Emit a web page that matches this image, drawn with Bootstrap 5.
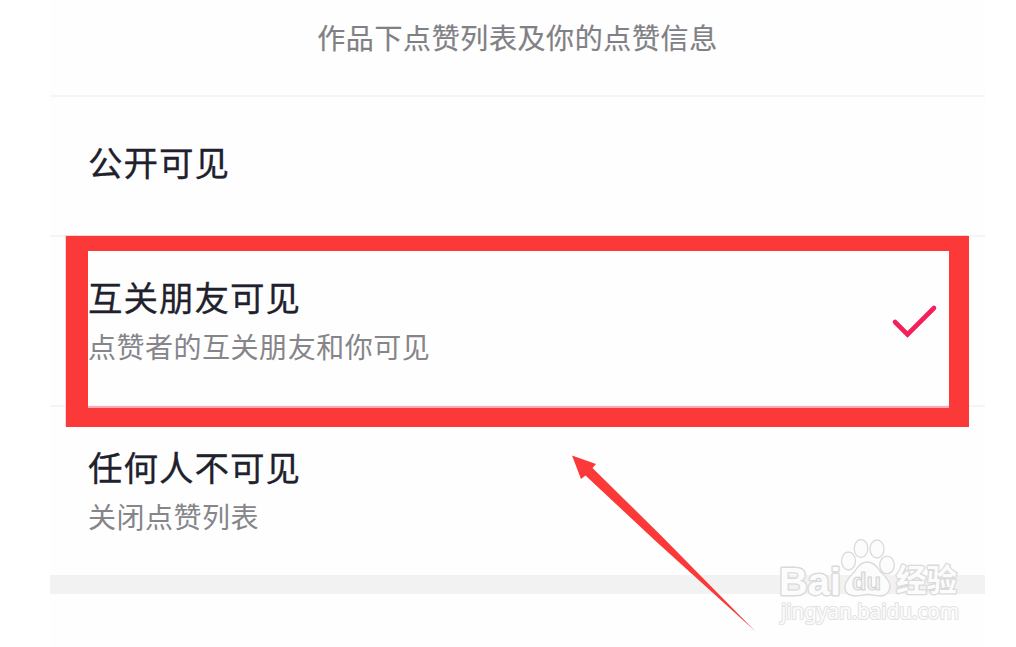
<!DOCTYPE html>
<html lang="zh-CN">
<head>
<meta charset="utf-8">
<title>点赞列表可见范围</title>
<link href="https://cdn.jsdelivr.net/npm/bootstrap@5.3.0/dist/css/bootstrap.min.css" rel="stylesheet">
<style>
body{font-family:"Noto Sans CJK SC",sans-serif;background:#fff;height:647px}
.sheet{width:935px;height:647px;margin-left:50px;background:#fefefe}
.intro{height:95px;padding-top:17px;font-size:28px;letter-spacing:.62px;line-height:40px;color:#808085;-webkit-text-stroke:.2px #808085}
.option{border-top:2px solid #f5f5f5;padding:0 39px 0 38px}
.option.public{height:140px;padding-top:39px}
.option.mutual{height:170px;padding-top:34px}
.option.nobody{height:170px;padding-top:34px}
.option-title{font-size:34.5px;line-height:50px;letter-spacing:1px;color:#20212c;-webkit-text-stroke:.3px #20212c}
.option-note{font-size:28px;line-height:40px;letter-spacing:.52px;color:#85858a;margin-top:5px}
.tick{width:64px;height:50px;margin:19px 1px 0 0}
.gap-band{height:19px;background:#f2f2f2}
.frame{left:66px;top:236px;width:903px;height:191px;border:solid #fb3939;border-width:15px 20px 19px 22px;box-shadow:inset 0 -2px #f9a9ba,-1px -1px 0 #fbd5da}
.arrow{left:565px;top:450px}
.brand{left:770px;top:530px}
</style>
</head>
<body class="position-relative overflow-hidden">
<main class="sheet d-flex flex-column">
  <header class="intro text-center">作品下点赞列表及你的点赞信息</header>
  <section class="option public"><div class="option-title">公开可见</div></section>
  <section class="option mutual d-flex justify-content-between align-items-start">
    <div><div class="option-title">互关朋友可见</div><div class="option-note">点赞者的互关朋友和你可见</div></div>
    <svg class="tick" viewBox="0 0 64 50" fill="none" stroke="#f5205a" stroke-width="4.600" stroke-linecap="round"><path d="M14 32L26.500 44.500L53 18"/></svg>
  </section>
  <section class="option nobody"><div class="option-title">任何人不可见</div><div class="option-note">关闭点赞列表</div></section>
  <div class="gap-band"></div>
</main>
<div class="frame position-absolute"></div>
<svg class="arrow position-absolute" width="200" height="190" viewBox="565 450 200 190"><path d="M572 455.500L596 464L592.500 468L660.500 535L755 631L655 540.500L585.500 475.500L581 479Z" fill="#fb3939"/></svg>
<svg class="brand position-absolute" width="210" height="110" viewBox="770 530 210 110" fill="#fcfcfc" stroke="#dadada" stroke-width="1.300" stroke-linejoin="round">
  <g font-weight="700" paint-order="stroke">
    <text x="779" y="594.500" font-family="Liberation Sans, sans-serif" font-size="39" textLength="62" lengthAdjust="spacingAndGlyphs" stroke-width="2.800">Bai</text>
    <text x="896" y="591" font-family="Noto Sans CJK SC, sans-serif" font-size="31" textLength="61" lengthAdjust="spacingAndGlyphs" stroke-width="2.600">经验</text>
  </g>
  <ellipse cx="848.500" cy="561" rx="7" ry="9"/><ellipse cx="861" cy="548.500" rx="6.800" ry="9"/><ellipse cx="877" cy="549" rx="7" ry="9"/><ellipse cx="887" cy="565" rx="7.300" ry="8.800"/>
  <path d="M867 562C861 562 858 566 855 571C851 576 845 580 845 587C845 594 850 596 856 596C861 596 864 594.500 868 594.500C872 594.500 875 596 880 596C886 596 890 592 890 586C890 580 884 576 880 571C877 566 873 562 867 562Z"/>
  <text x="852" y="590" font-family="Liberation Sans, sans-serif" font-size="24" font-weight="700" textLength="29" lengthAdjust="spacingAndGlyphs" stroke="#d2d2d2" fill="#f2f2f2" stroke-width="1">du</text>
  <text x="781" y="619" font-family="Noto Sans, sans-serif" font-size="21" textLength="178" lengthAdjust="spacingAndGlyphs" paint-order="stroke" stroke="#e3e3e3" stroke-width="2.200">jingyan.baidu.com</text>
</svg>
<script src="https://cdn.jsdelivr.net/npm/bootstrap@5.3.0/dist/js/bootstrap.bundle.min.js"></script>
</body>
</html>
